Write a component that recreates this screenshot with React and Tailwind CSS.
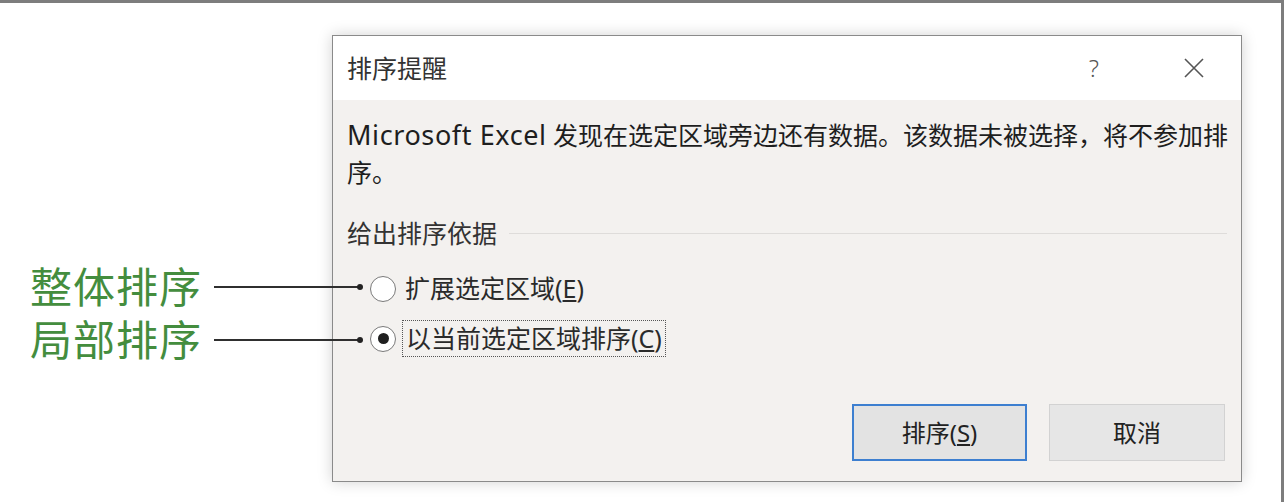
const FONT = "font-['Noto_Sans','Noto_Sans_CJK_SC',sans-serif]";

function Annotation({ label }) {
  return (
    <div className="flex items-center h-[50px] pl-[30px] mr-[-31px] relative z-10">
      <span className="text-[42px] leading-none text-[#448d3e] tracking-[1px]">{label}</span>
      <div className="flex-1 h-[2px] bg-[#2f2f2f] ml-[12px]" />
      <div className="w-[6px] h-[6px] rounded-full bg-[#222] ml-[-3px]" />
    </div>
  );
}

function Radio({ checked }) {
  return (
    <div className="w-[26px] h-[26px] rounded-full border-[1.5px] border-[#7a7a7a] bg-white flex items-center justify-center shrink-0">
      {checked && <div className="w-[11px] h-[11px] rounded-full bg-[#1f1f1f]" />}
    </div>
  );
}

export default function App() {
  return (
    <div className={`w-[1284px] h-[502px] bg-white border-t-[3px] border-r-[3px] border-[#7d7d7d] flex ${FONT}`}>
      {/* left annotations */}
      <div className="w-[332px] shrink-0 flex flex-col pt-[259px] gap-[3px]">
        <Annotation label="整体排序" />
        <Annotation label="局部排序" />
      </div>

      {/* dialog */}
      <div className="w-[910px] h-[447px] mt-[32px] border border-[#8a8a8a] shadow-[0_0_14px_rgba(0,0,0,0.18)] flex flex-col bg-[#f3f1ef]">
        <div className="h-[64px] bg-white flex items-center pl-[14px] pr-[36px] shrink-0">
          <span className="text-[25px] text-[#333] leading-none">排序提醒</span>
          <span className="ml-auto text-[24px] text-[#555] leading-none font-light">?</span>
          <svg className="ml-[84px]" width="22" height="22" viewBox="0 0 22 22">
            <path d="M2 2 L20 20 M20 2 L2 20" stroke="#555" strokeWidth="1.6" fill="none" />
          </svg>
        </div>

        <div className="flex-1 flex flex-col px-[14px] pt-[16px] pb-[20px] text-[#1e1e1e]">
          <div className="text-[25px] leading-[37px] whitespace-nowrap">
            <div>
              <span className="text-[27px] tracking-[0.6px]">Microsoft Excel</span> 发现在选定区域旁边还有数据。该数据未被选择，将不参加排
            </div>
            <div>序。</div>
          </div>

          <div className="flex items-center mt-[24px] h-[37px]">
            <span className="text-[25px] text-[#333] leading-none">给出排序依据</span>
            <div className="flex-1 h-px bg-[#dedcda] ml-[12px]" />
          </div>

          <div className="flex flex-col pl-[23px] mt-[18px] gap-[13px]">
            <div className="flex items-center h-[37px]">
              <Radio />
              <span className="ml-[9px] text-[25px] leading-none text-[#2a2a2a]">扩展选定区域(<span className="underline">E</span>)</span>
            </div>
            <div className="flex items-center h-[37px]">
              <Radio checked />
              <span className="ml-[6px] h-[37px] px-[3px] flex items-center border border-dotted border-[#555] text-[25px] leading-none text-[#2a2a2a]">
                以当前选定区域排序(<span className="underline">C</span>)
              </span>
            </div>
          </div>

          <div className="mt-auto flex justify-end gap-[22px] pr-[2px]">
            <button className="w-[175px] h-[57px] border-2 border-[#3d7fd0] bg-[#e3e3e3] text-[24px] text-[#222]">
              排序(<span className="underline">S</span>)
            </button>
            <button className="w-[176px] h-[57px] border border-[#d2d2d2] bg-[#e6e6e6] text-[24px] text-[#222]">
              取消
            </button>
          </div>
        </div>
      </div>
    </div>
  );
}
